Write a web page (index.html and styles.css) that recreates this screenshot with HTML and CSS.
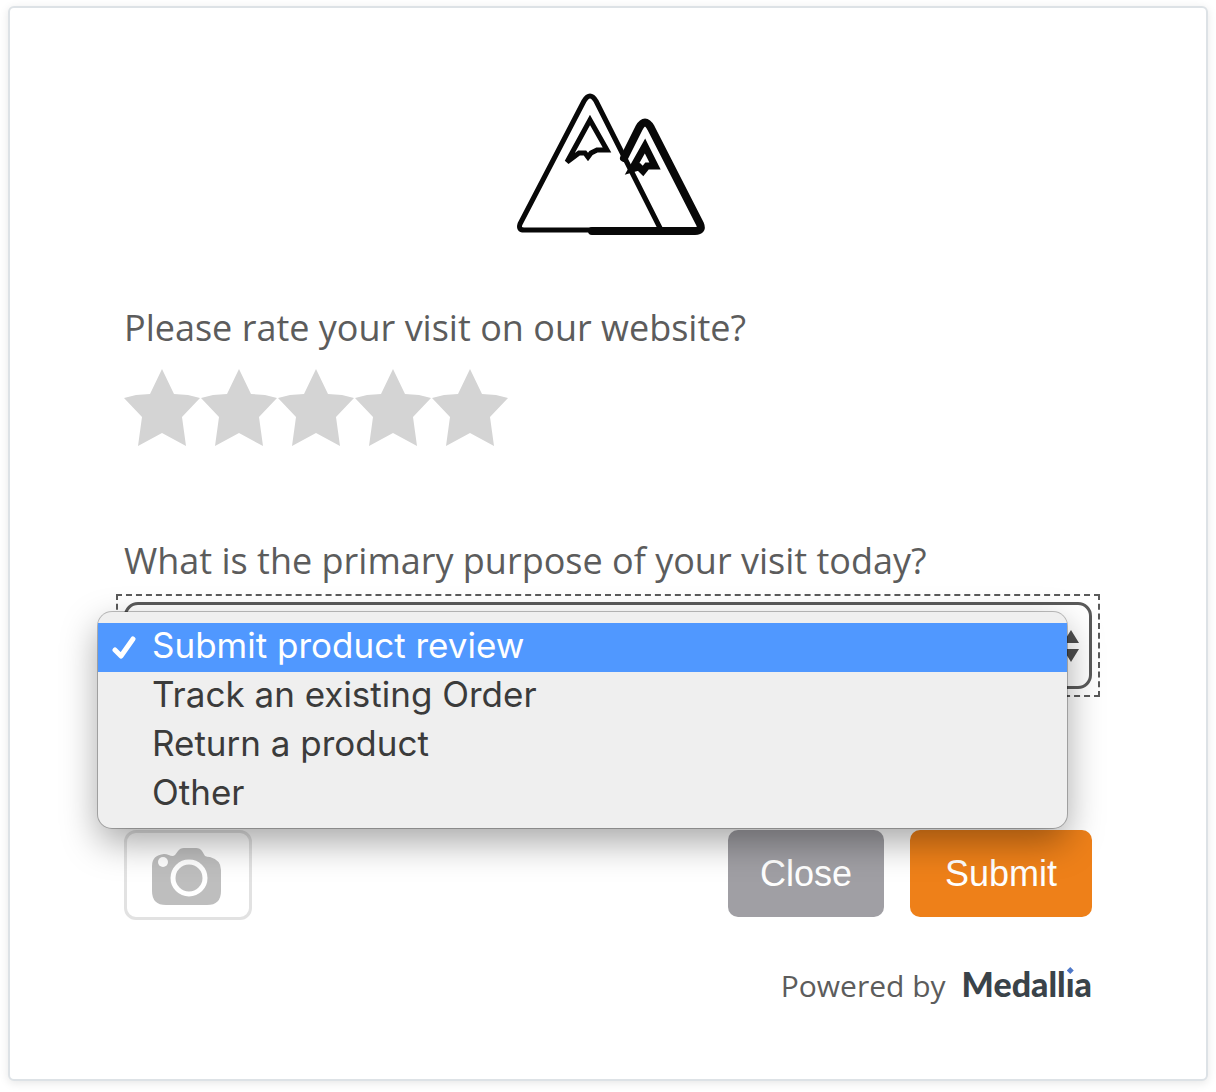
FILE: index.html
```html
<!DOCTYPE html>
<html lang="en">
<head>
<meta charset="utf-8">
<meta name="viewport" content="width=device-width, initial-scale=1">
<title>Website feedback</title>
<link rel="stylesheet" href="styles.css">
</head>
<body>
<form class="card">
  <svg class="logo" viewBox="0 0 192 146" role="img" aria-label="Mountains" fill="none" stroke="#080808" stroke-linejoin="round" stroke-linecap="round">
    <path stroke-width="8" d="M108 66 123 36Q129 25 135 36L184 132Q187 139 179 139H76"/>
    <path stroke-width="5" d="M146 138H8Q2 138 4 132L68 9Q74 -1 80 9L144 136"/>
    <path stroke-width="5" stroke-linejoin="miter" d="M74 28 91 58H81L75 61 72 65 69 61 63 61 51 70Z"/>
    <path stroke-width="7" stroke-linejoin="miter" d="M129 54 139 74H131L127 79 123 75 116 77Z"/>
  </svg>

  <fieldset class="field rating">
    <legend class="question">Please rate your visit on our website?</legend>
    <div class="stars">
      <input class="star" type="radio" name="rating" value="1" aria-label="1 star">
      <input class="star" type="radio" name="rating" value="2" aria-label="2 stars">
      <input class="star" type="radio" name="rating" value="3" aria-label="3 stars">
      <input class="star" type="radio" name="rating" value="4" aria-label="4 stars">
      <input class="star" type="radio" name="rating" value="5" aria-label="5 stars">
    </div>
  </fieldset>

  <div class="field purpose">
    <label class="question" for="purpose">What is the primary purpose of your visit today?</label>
    <div class="select-wrap">
      <select class="select" id="purpose" name="purpose">
        <option></option>
        <option>Submit product review</option>
        <option>Track an existing Order</option>
        <option>Return a product</option>
        <option>Other</option>
      </select>
      <svg class="arrows" viewBox="0 0 16 32" aria-hidden="true" fill="#4f4f4f"><path d="M8 0 16 13H0ZM0 19H16L8 32Z"/></svg>
      <ul class="menu" role="listbox" aria-label="Purpose of visit">
        <li class="option selected" role="option" aria-selected="true">
          <svg class="check" viewBox="0 0 24 24" aria-hidden="true"><path d="M3 15 9 21 21 4" fill="none" stroke="#fff" stroke-width="5" stroke-linecap="round" stroke-linejoin="round"/></svg>Submit product review</li>
        <li class="option" role="option">Track an existing Order</li>
        <li class="option" role="option">Return a product</li>
        <li class="option" role="option">Other</li>
      </ul>
    </div>
  </div>

  <div class="actions">
    <button class="camera" type="button" aria-label="Attach a screenshot">
      <svg class="camera-icon" viewBox="0 0 72 58" aria-hidden="true">
        <path fill="#bebebe" d="M12 6C17 6 20 10 23 7L26 3Q28 0 32 0H44Q48 0 50 3L53 8Q55 9 58 9Q69 12 69 22V43Q69 57 55 57H14Q0 57 0 43V18Q0 7 12 6Z"/>
        <circle cx="11" cy="14" r="5" fill="#fff"/>
        <circle cx="37" cy="30" r="16" fill="none" stroke="#fff" stroke-width="5"/>
      </svg>
    </button>
    <button class="btn close" type="button">Close</button>
    <button class="btn submit" type="submit">Submit</button>
  </div>

  <footer class="powered">
    <span>Powered by</span>
    <span class="brand">Medall<span class="brand-i">i</span>a</span>
  </footer>
</form>
</body>
</html>
```
FILE: styles.css
```css
* {
  box-sizing: border-box;
}

body {
  margin: 0;
  padding: 6px 8px 10px;
  background: #fff;
  color: #5c5c5c;
  font-family: "Open Sans", sans-serif;
  font-size: 36px;
  line-height: 48px;
}

.card {
  display: flex;
  flex-direction: column;
  min-height: calc(100vh - 17px);
  padding: 84px 114px 64px;
  border: 2px solid #dde2e6;
  border-radius: 6px;
  background: #fff;
  box-shadow: 0 2px 10px rgba(0, 0, 0, 0.1);
}

.logo {
  width: 192px;
  height: 146px;
  align-self: center;
  margin-bottom: 66px;
  margin-right: -8px;
  overflow: visible;
}

.field {
  min-width: 0;
  margin: 0;
  padding: 0;
  border: 0;
}

.question {
  display: block;
  padding: 0;
}

.stars {
  display: flex;
  padding-top: 17px;
}

.star {
  appearance: none;
  width: 77px;
  height: 77px;
  margin: 0;
  background: #d4d4d4;
  clip-path: polygon(38px 0, 50px 25px, 64px 26px, 76px 29px, 58px 48px, 62px 77px, 38px 64px, 14px 77px, 18px 48px, 0 29px, 12px 26px, 26px 25px);
}

.purpose {
  margin-top: 91px;
}

.select-wrap {
  position: relative;
  margin: 9px -8px 0;
  padding: 6px;
  border: 2px dashed #5a5a5a;
}

.select {
  display: block;
  appearance: none;
  width: 100%;
  height: 87px;
  border: 3px solid #5a5a5a;
  border-radius: 14px;
  background: #fff;
  font: inherit;
}

.arrows {
  position: absolute;
  top: 34px;
  right: 19px;
  width: 16px;
  height: 32px;
}

.menu {
  position: absolute;
  top: 16px;
  left: -20px;
  right: 31px;
  margin: 0;
  padding: 11px 0 9px;
  border-radius: 14px;
  background: #efefef;
  box-shadow: 0 0 0 1px rgba(0, 0, 0, 0.25), 0 14px 36px rgba(0, 0, 0, 0.35);
  color: #3b3b3b;
  font-family: Inter, sans-serif;
  font-size: 35px;
  line-height: 45px;
  list-style: none;
}

.option {
  position: relative;
  height: 49px;
  padding-left: 54px;
}

.selected {
  background: #5098ff;
  color: #fff;
}

.check {
  position: absolute;
  top: 12px;
  left: 14px;
  width: 24px;
  height: 24px;
}

.actions {
  display: flex;
  align-items: flex-start;
  gap: 26px;
  margin-top: 133px;
}

.camera {
  display: flex;
  align-items: center;
  justify-content: center;
  width: 128px;
  height: 90px;
  margin-right: auto;
  padding: 3px 0 0;
  border: 3px solid #e2e2e2;
  border-radius: 12px;
  background: #fff;
}

.camera-icon {
  width: 72px;
  height: 58px;
}

.btn {
  height: 87px;
  border: 0;
  border-radius: 10px;
  color: #fff;
  font-family: "Liberation Sans", Arial, sans-serif;
  font-size: 36px;
}

.close {
  padding: 0 32px;
  background: #a09fa4;
}

.submit {
  padding: 0 35px;
  background: #ee8019;
}

.powered {
  display: flex;
  align-items: baseline;
  justify-content: flex-end;
  gap: 16px;
  margin-top: 40px;
  font-size: 30px;
}

.brand {
  color: #3a4349;
  font-family: Lato, sans-serif;
  font-size: 34px;
  font-weight: 900;
}

.brand-i {
  position: relative;
}

/* blue diamond in place of the dot on the i */
.brand-i::before,
.brand-i::after {
  content: "";
  position: absolute;
  top: 4px;
  left: 0;
  width: 9px;
  height: 12px;
  background: #fff;
}

.brand-i::after {
  top: 4px;
  left: 1px;
  width: 7px;
  height: 7px;
  background: #4e78c8;
  clip-path: polygon(50% 0, 100% 50%, 50% 100%, 0 50%);
}
```
